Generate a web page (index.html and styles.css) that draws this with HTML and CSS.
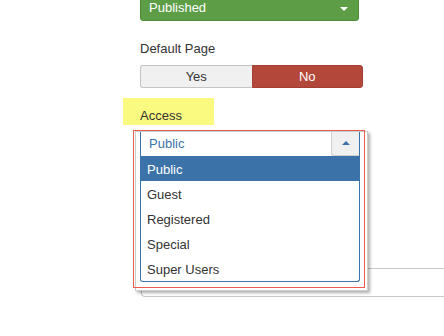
FILE: index.html
```html
<!DOCTYPE html>
<html lang="en">
<head>
  <meta charset="UTF-8">
  <title>Access</title>
  <link rel="stylesheet" href="styles.css">
</head>
<body>
  <div class="form">
    <div class="status-btn">
      <span>Published</span>
      <span class="caret-down"></span>
    </div>

    <div class="label">Default Page</div>
    <div class="toggle">
      <div class="toggle-yes">Yes</div>
      <div class="toggle-no">No</div>
    </div>

    <div class="label-access">Access</div>

    <div class="access-field">
      <div class="bg-input"></div>

      <div class="popup">
        <div class="select">
          <div class="select-head">
            <span class="select-value">Public</span>
            <span class="select-btn"><span class="caret-up"></span></span>
          </div>
          <ul class="options">
            <li class="active">Public</li>
            <li>Guest</li>
            <li>Registered</li>
            <li>Special</li>
            <li>Super Users</li>
          </ul>
        </div>
      </div>

      <div class="marker"></div>
    </div>
  </div>
</body>
</html>
```

FILE: styles.css
```css
body {
  margin: 0;
  font-family: "Liberation Sans", Arial, sans-serif;
  font-size: 13px;
  color: #333;
  background: #fff;
  overflow: hidden;
}

.form {
  padding-left: 140px;
}

.status-btn {
  box-sizing: border-box;
  width: 219px;
  height: 26px;
  margin-top: -5px;
  padding: 0 10px 0 8px;
  display: flex;
  align-items: center;
  justify-content: space-between;
  background: #5c9d46;
  border: 1px solid #4f8d3b;
  border-radius: 3px;
  color: #fff;
  line-height: 24px;
}

.caret-down {
  width: 0;
  height: 0;
  border-left: 4px solid transparent;
  border-right: 4px solid transparent;
  border-top: 4px solid #fff;
  margin-top: 2px;
}

.label {
  margin-top: 18px;
  line-height: 20px;
}

.toggle {
  display: flex;
  width: 223px;
  height: 23px;
  margin-top: 6px;
}

.toggle div {
  box-sizing: border-box;
  width: 50%;
  text-align: center;
  line-height: 21px;
}

.toggle-yes {
  background: #f0f0f0;
  border: 1px solid #c4c4c4;
  border-right: none;
  border-radius: 3px 0 0 3px;
}

.toggle-no {
  background: #b2473a;
  border: 1px solid #a33e32;
  border-radius: 0 3px 3px 0;
  color: #fff;
}

.label-access {
  box-sizing: border-box;
  width: 91px;
  height: 27px;
  margin-top: 10px;
  margin-left: -17px;
  padding: 9px 0 0 17px;
  line-height: 18px;
  background: #fbfa80;
}

.access-field {
  position: relative;
  height: 180px;
  padding-top: 143px;
  box-sizing: border-box;
}

/* field below, cut off by the window edge */
.bg-input {
  box-sizing: border-box;
  width: 303px;
  height: 29px;
  margin-left: 1px;
  border: 1px solid #c8c8c8;
  border-right: none;
  border-radius: 4px 0 0 4px;
}

.popup {
  position: absolute;
  left: -5px;
  top: 6px;
  box-sizing: border-box;
  width: 233px;
  height: 160px;
  padding-left: 4px;
  background: #fff;
  border: 1px solid #cccccc;
  box-shadow: 2px 2px 3px rgba(0, 0, 0, 0.32);
}

.select {
  box-sizing: border-box;
  width: 220px;
  border: 1px solid #3b73a9;
  border-top: none;
  border-radius: 0 0 3px 3px;
  background: #fff;
}

.select-head {
  display: flex;
  justify-content: space-between;
  height: 24px;
}

.select-value {
  padding-left: 8px;
  line-height: 23px;
  color: #3b73a9;
}

.select-btn {
  box-sizing: border-box;
  width: 28px;
  height: 24px;
  display: flex;
  align-items: center;
  justify-content: center;
  background: #f0f0f0;
  border-left: 1px solid #cfcfcf;
  border-bottom: 1px solid #cfcfcf;
  border-radius: 0 0 0 3px;
}

.caret-up {
  width: 0;
  height: 0;
  border-left: 4px solid transparent;
  border-right: 4px solid transparent;
  border-bottom: 4px solid #3b73a9;
  margin-top: -1px;
}

.options {
  list-style: none;
  margin: 0;
  padding: 0;
}

.options li {
  box-sizing: border-box;
  height: 25px;
  padding: 1px 0 0 6px;
  line-height: 25px;
}

.options li.active {
  background: #3b73a9;
  color: #fff;
}

.marker {
  position: absolute;
  left: -7px;
  top: 5px;
  box-sizing: border-box;
  width: 232px;
  height: 158px;
  border: 1px solid #ec5c4d;
}
```
